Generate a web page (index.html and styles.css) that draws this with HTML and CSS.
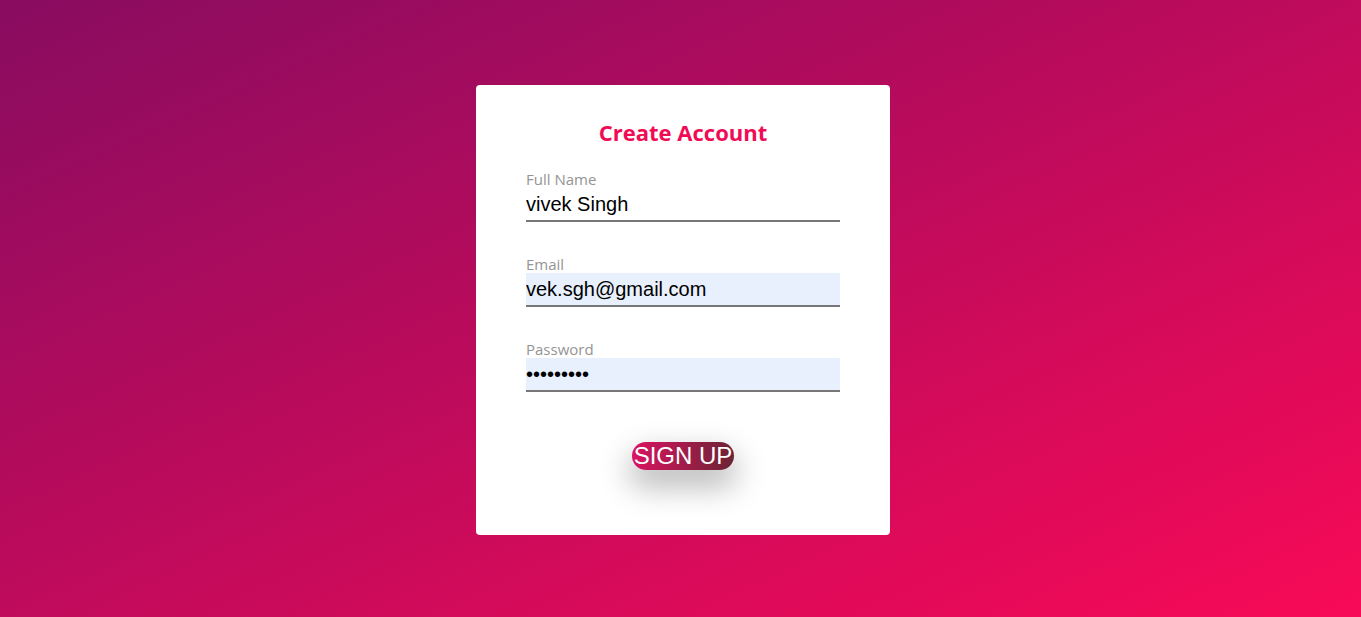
FILE: index.html
```html
<!DOCTYPE html>
<html>
<head>
<meta charset="utf-8">
<link rel="stylesheet" href="styles.css">
</head>
<body>
<div class="page">
  <form class="card">
    <h2 class="title">Create Account</h2>
    <div class="field">
      <label class="label">Full Name</label>
      <input class="input" type="text" value="vivek Singh">
    </div>
    <div class="field">
      <label class="label">Email</label>
      <input class="input filled" type="text" value="vek.sgh@gmail.com">
    </div>
    <div class="field">
      <label class="label">Password</label>
      <input class="input filled" type="password" value="123456789">
    </div>
    <div class="actions">
      <button class="btn" type="button">SIGN UP</button>
    </div>
  </form>
</div>
</body>
</html>
```
FILE: styles.css
```css
html, body {
  margin: 0;
  height: 100%;
}
body {
  background: linear-gradient(to bottom right, #880c60, #f80a57);
  font-family: "Open Sans", "Noto Sans", sans-serif;
}
.page {
  display: flex;
  justify-content: center;
  padding: 85px 0 0 5px;
}
.card {
  height: 450px;
  box-sizing: border-box;
  width: 414px;
  background: #fff;
  border-radius: 4px;
  padding: 27px 50px 0;
  display: flex;
  flex-direction: column;
}
.title {
  margin: 0 0 19px;
  text-align: center;
  color: #f10b55;
  font-size: 22px;
  font-weight: 700;
  line-height: 40px;
}
.field {
  display: flex;
  flex-direction: column;
  margin-bottom: 34px;
}
.label {
  color: #949494;
  font-size: 15px;
  line-height: 17px;
}
.input {
  border: none;
  border-bottom: 2px solid #777;
  outline: none;
  height: 34px;
  box-sizing: border-box;
  padding: 0;
  font-family: "Liberation Sans", Arial, sans-serif;
  font-size: 20px;
  color: #000;
  background: transparent;
}
.input.filled {
  background: #e8f0fe;
}
.actions {
  display: flex;
  justify-content: center;
  margin-top: 16px;
}
.btn {
  width: 102px;
  height: 28px;
  border: none;
  border-radius: 14px;
  padding: 0;
  background: linear-gradient(to right, #da1461, #6a2434);
  color: #fff;
  font-family: "Liberation Sans", Arial, sans-serif;
  font-size: 24px;
  line-height: 28px;
  white-space: nowrap;
  overflow: visible;
  box-shadow: 0 14px 30px 4px rgba(0, 0, 0, 0.26);
}
```
